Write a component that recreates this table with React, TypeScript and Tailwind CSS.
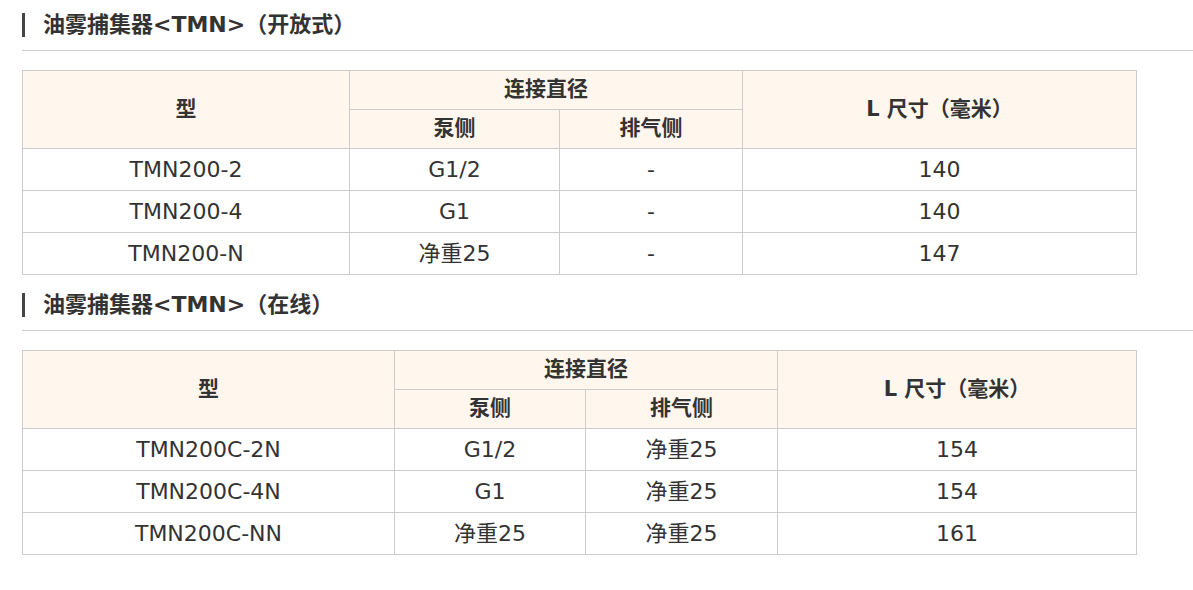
const font = { fontFamily: '"DejaVu Sans", "Noto Sans CJK SC", sans-serif' }

type Row = [string, string, string, string]

const sections: { title: string; widths: number[]; rows: Row[] }[] = [
  {
    title: '油雾捕集器<TMN>（开放式）',
    widths: [327, 210, 183, 394],
    rows: [
      ['TMN200-2', 'G1/2', '-', '140'],
      ['TMN200-4', 'G1', '-', '140'],
      ['TMN200-N', '净重25', '-', '147'],
    ],
  },
  {
    title: '油雾捕集器<TMN>（在线）',
    widths: [372, 191, 192, 359],
    rows: [
      ['TMN200C-2N', 'G1/2', '净重25', '154'],
      ['TMN200C-4N', 'G1', '净重25', '154'],
      ['TMN200C-NN', '净重25', '净重25', '161'],
    ],
  },
]

const th = 'border border-[#cccccc] bg-[#fff7ee] font-bold text-[21px] text-[#333333] h-[39px] p-0 text-center align-middle'
const td = 'border border-[#cccccc] text-[22px] text-[#333333] h-[42px] p-0 text-center align-middle font-normal'

function Heading({ title }: { title: string }) {
  return (
    <div className="border-b border-[#cccccc] pb-[13px]">
      <div className="h-[24px] border-l-[3px] border-[#444444] pl-[18px] flex items-center">
        <h2 className="text-[22px] font-bold text-[#333333] leading-none whitespace-nowrap">
          {title}
        </h2>
      </div>
    </div>
  )
}

export default function App() {
  return (
    <div className="min-h-screen bg-white pl-[22px] pt-[13px] overflow-hidden" style={font}>
      {sections.map((s, i) => (
        <div key={i} className={i > 0 ? 'mt-[18px]' : ''}>
          <Heading title={s.title} />
          <table className="mt-[19px] border-collapse table-fixed w-[1114px]">
            <colgroup>
              {s.widths.map((w, j) => (
                <col key={j} style={{ width: w }} />
              ))}
            </colgroup>
            <thead>
              <tr>
                <th rowSpan={2} className={th}>型</th>
                <th colSpan={2} className={th}>连接直径</th>
                <th rowSpan={2} className={th}>L 尺寸（毫米）</th>
              </tr>
              <tr>
                <th className={th}>泵侧</th>
                <th className={th}>排气侧</th>
              </tr>
            </thead>
            <tbody>
              {s.rows.map((r, k) => (
                <tr key={k}>
                  {r.map((c, m) => (
                    <td key={m} className={td}>{c}</td>
                  ))}
                </tr>
              ))}
            </tbody>
          </table>
        </div>
      ))}
    </div>
  )
}
